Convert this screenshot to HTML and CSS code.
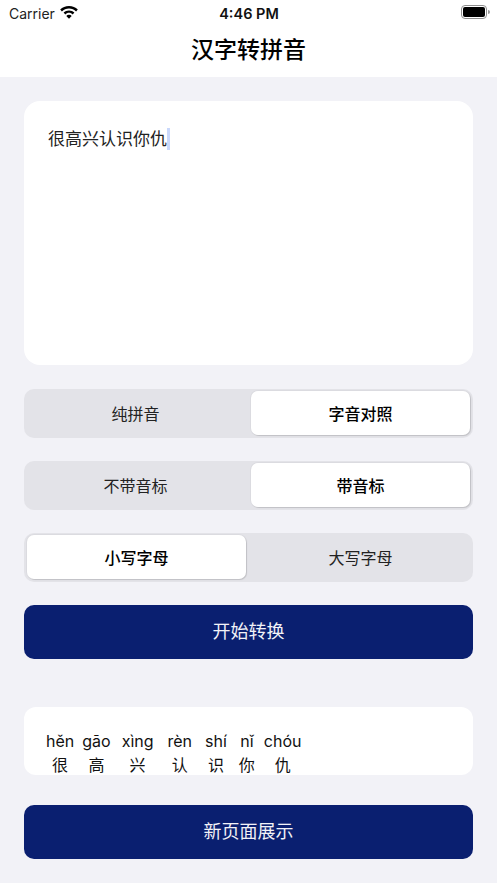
FILE: index.html
```html
<!DOCTYPE html>
<html lang="zh">
<head>
<meta charset="utf-8">
<title>汉字转拼音</title>
<link rel="stylesheet" href="styles.css">
</head>
<body>
<header class="top">
  <div class="status">
    <div class="status-left">
      <span class="carrier">Carrier</span>
      <svg class="wifi" width="18" height="13" viewBox="0 0 18 13"><path d="M9 0C5.500 0 2.400 1.300.2 3.600l1.700 1.800C3.700 3.500 6.200 2.400 9 2.400s5.300 1.100 7.100 3l1.700-1.800C15.600 1.300 12.500 0 9 0z"/><path d="M9 4.400c-2.100 0-4 .8-5.400 2.200l1.700 1.800c1-1 2.300-1.600 3.700-1.600s2.700.6 3.700 1.600l1.700-1.800C13 5.200 11.100 4.400 9 4.400z"/><path d="M9 8.800c-1.100 0-2 .4-2.700 1.100L9 12.800l2.700-2.900C11 9.200 10.100 8.800 9 8.800z"/></svg>
    </div>
    <span class="time">4:46 PM</span>
    <div class="battery"><span class="battery-body"><span class="battery-fill"></span></span><span class="battery-cap"></span></div>
  </div>
  <h1 class="title">汉字转拼音</h1>
</header>
<main class="content">
  <section class="input-card"><span class="input-text">很高兴认识你仇</span><span class="caret"></span></section>
  <div class="segment first">
    <div class="seg-item">纯拼音</div>
    <div class="seg-item on">字音对照</div>
  </div>
  <div class="segment">
    <div class="seg-item">不带音标</div>
    <div class="seg-item on">带音标</div>
  </div>
  <div class="segment left-on">
    <div class="seg-item on">小写字母</div>
    <div class="seg-item">大写字母</div>
  </div>
  <button class="action">开始转换</button>
  <section class="result">
    <div class="col"><span class="py">hěn</span><span class="hz">很</span></div>
    <div class="col"><span class="py">gāo</span><span class="hz">高</span></div>
    <div class="col"><span class="py">xìng</span><span class="hz">兴</span></div>
    <div class="col"><span class="py">rèn</span><span class="hz">认</span></div>
    <div class="col"><span class="py">shí</span><span class="hz">识</span></div>
    <div class="col"><span class="py">nǐ</span><span class="hz">你</span></div>
    <div class="col"><span class="py">chóu</span><span class="hz">仇</span></div>
  </section>
  <button class="action second">新页面展示</button>
</main>
</body>
</html>
```
FILE: styles.css
```css
* { box-sizing: border-box; }
html, body { margin: 0; padding: 0; }
body {
  width: 497px;
  height: 883px;
  overflow: hidden;
  background: #f2f2f7;
  font-family: "Inter", "Noto Sans CJK SC", "Liberation Sans", sans-serif;
  color: #000;
}
.top { background: #fff; height: 77px; }
.status {
  height: 26px;
  display: grid;
  grid-template-columns: 1fr auto 1fr;
  align-items: center;
  padding: 0 7px 0 9px;
}
.status-left { display: flex; align-items: center; gap: 5px; }
.carrier { font-size: 14px; color: #222; }
.wifi { fill: #000; margin-bottom: 2px; }
.time { font-size: 14.500px; font-weight: 600; color: #111; margin-left: -1px; }
.battery { justify-self: end; display: flex; align-items: center; gap: 1px; margin-bottom: 2px; }
.battery-body {
  width: 26px; height: 14px; border: 1px solid #8e8e8e; border-radius: 4px; padding: 1px; display: block;
}
.battery-fill { display: block; height: 100%; background: #000; border-radius: 2px; }
.battery-cap { width: 2px; height: 4px; background: #999; border-radius: 0 2px 2px 0; }
.title {
  margin: 0;
  height: 51px;
  line-height: 48px;
  text-align: center;
  font-size: 23px;
  font-weight: 500;
}
.content { padding: 24px 24px 0; display: flex; flex-direction: column; }
.input-card {
  height: 264px;
  background: #fff;
  border-radius: 16px;
  padding: 26px 24px;
  display: flex;
  align-items: flex-start;
  font-size: 17px;
  line-height: 24px;
  color: #222;
}
.caret { width: 2.500px; height: 22px; background: #c9d8fb; margin-top: 1px; }
.segment {
  height: 49px;
  margin-top: 23px;
  background: #e3e3e8;
  border-radius: 10px;
  display: grid;
  grid-template-columns: 225px 1fr;
  padding: 2px 3px 3px 2px;
  font-size: 16px;
}
.first { margin-top: 24px; }
.left-on { grid-template-columns: 219px 1fr; padding: 2px 2px 3px 3px; }
.seg-item { display: flex; align-items: center; justify-content: center; color: #222; padding-bottom: 1px; padding-right: 6px; }
.left-on .seg-item { padding-right: 0; padding-left: 4px; }
.seg-item.on, .left-on .seg-item.on {
  background: #fff;
  border-radius: 7px;
  font-weight: 500;
  color: #000;
  padding: 0 0 1px;
  box-shadow: 1px 1px 1px rgba(0, 0, 0, .12), 0 0 0 1px rgba(0, 0, 0, .03);
}
.action {
  height: 54px;
  margin-top: 23px;
  border: 0;
  border-radius: 10px;
  background: #0a1f70;
  color: #f2f2f7;
  font: inherit;
  font-size: 18px;
  padding-bottom: 5px;
}
.second { margin-top: 30px; }
.result {
  height: 68px;
  margin-top: 48px;
  background: #fff;
  border-radius: 12px;
  padding: 22px 22px 0;
  display: flex;
  overflow: hidden;
  font-size: 16px;
  color: #111;
}
.col { display: flex; flex-direction: column; align-items: center; line-height: 24px; margin-right: 13px; }
.col:nth-child(1) { margin-right: 8px; }
.col:nth-child(2) { margin-right: 11px; }
.col:nth-child(3) { margin-right: 14px; }
.col:nth-child(5) { margin-right: 12px; }
.col:nth-child(6) { margin-right: 9px; }
.py { height: 26px; }
```
